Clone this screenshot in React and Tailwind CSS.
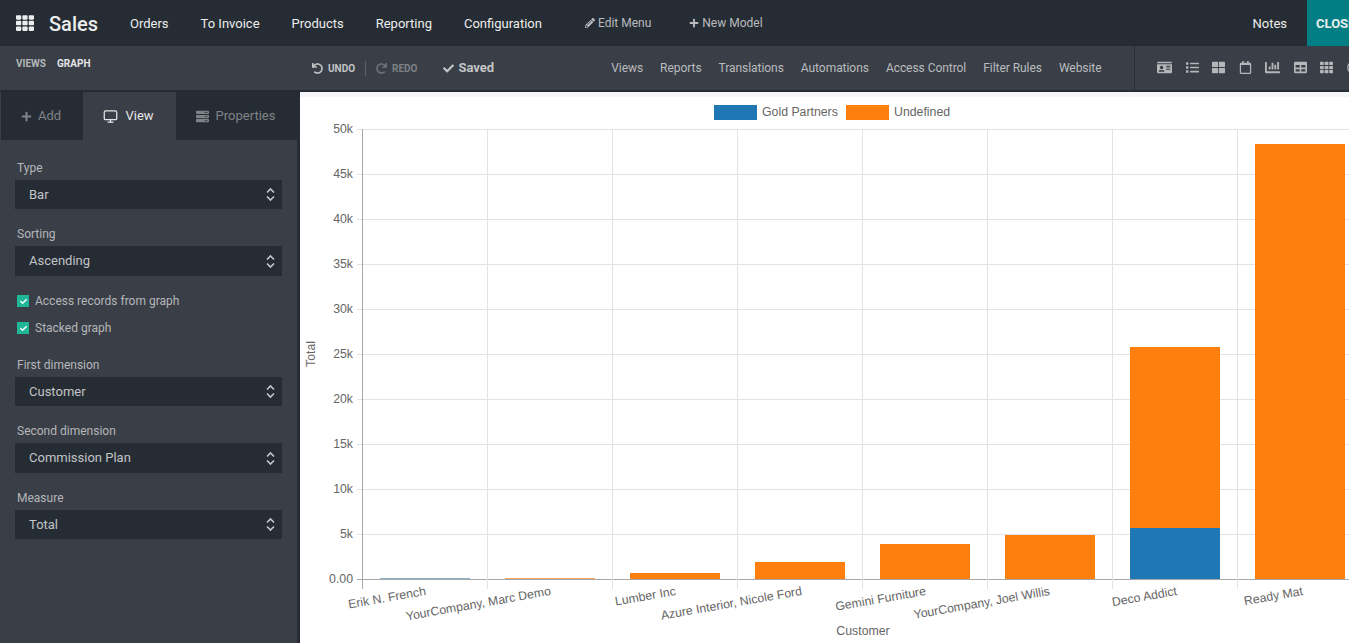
import { FaTh, FaPencilAlt, FaPlus, FaUndo, FaRedo, FaCheck, FaServer, FaIdCard, FaList, FaThLarge, FaRegCalendar, FaChartBar, FaTable, FaRegClock } from 'react-icons/fa';
import { Monitor } from 'lucide-react';

const menu = ['Orders', 'To Invoice', 'Products', 'Reporting', 'Configuration'];
const tools = ['Views', 'Reports', 'Translations', 'Automations', 'Access Control', 'Filter Rules', 'Website'];
const viewIcons = [FaIdCard, FaList, FaThLarge, FaRegCalendar, FaChartBar, FaTable, FaTh, FaRegClock];

const Select = ({ label, value, tall }) => (
  <div>
    <div className="text-[12px] leading-[16px] text-[#b4b6b9] pl-[2px] mb-[4px]">{label}</div>
    <div className={`w-[267px] ${tall ? 'h-[30px]' : 'h-[29px]'} bg-[#262c34] flex items-center justify-between pl-[14px] pr-[7px] text-[13px] text-[#c2c4c6]`}>
      <span>{value}</span>
      <svg width="9" height="15" viewBox="0 0 9 15" fill="none" stroke="#c2c4c6" strokeWidth="1.7">
        <path d="M1 5.5 L4.5 2 L8 5.5" />
        <path d="M1 9.5 L4.5 13 L8 9.5" />
      </svg>
    </div>
  </div>
);

const Check = ({ label }) => (
  <div className="flex items-center gap-[6px] pl-[2px] text-[12px] leading-[16px] text-[#b4b6b9]">
    <span className="w-[12px] h-[12px] bg-[#1fb797] flex items-center justify-center text-white">
      <FaCheck size={7} />
    </span>
    {label}
  </div>
);

const ticks = ['0.00', '5k', '10k', '15k', '20k', '25k', '30k', '35k', '40k', '45k', '50k'];
const bars = [
  { x: 380, top: 578, color: '#8ab4cc' },
  { x: 505, top: 578, color: '#f5a35c' },
  { x: 630, top: 573, color: '#ff7f0e' },
  { x: 755, top: 562, color: '#ff7f0e' },
  { x: 880, top: 544, color: '#ff7f0e' },
  { x: 1005, top: 535, color: '#ff7f0e' },
  { x: 1130, top: 347, color: '#ff7f0e' },
  { x: 1255, top: 144, color: '#ff7f0e' },
];
const labels = [
  { t: 'Erik N. French', x: 425, y: 587 },
  { t: 'YourCompany, Marc Demo', x: 550, y: 587 },
  { t: 'Lumber Inc', x: 675, y: 587 },
  { t: 'Azure Interior, Nicole Ford', x: 801, y: 587 },
  { t: 'Gemini Furniture', x: 925, y: 587 },
  { t: 'YourCompany, Joel Willis', x: 1049, y: 587 },
  { t: 'Deco Addict', x: 1176, y: 587 },
  { t: 'Ready Mat', x: 1302, y: 587 },
];

const Chart = () => (
  <svg viewBox="300 97 1049 546" className="w-full h-full block" fontFamily="'Liberation Sans', Arial, sans-serif" fontSize="12.3" fill="#666">
    <rect x="714" y="105" width="43" height="15" fill="#1f77b4" />
    <text x="762" y="116">Gold Partners</text>
    <rect x="846" y="105" width="43" height="15" fill="#ff7f0e" />
    <text x="894" y="116">Undefined</text>

    {ticks.map((t, i) => {
      const y = 579.5 - i * 45;
      return (
        <g key={t}>
          <line x1="357" x2="1349" y1={y} y2={y} stroke={i === 0 ? '#a8a8a8' : '#e3e3e3'} />
          <text x="353" y={y + 3} textAnchor="end">{t}</text>
        </g>
      );
    })}
    {[362, 487, 612, 737, 862, 987, 1112, 1237].map((x, i) => (
      <line key={x} x1={x + 0.5} x2={x + 0.5} y1="129" y2="589" stroke={i === 0 ? '#a8a8a8' : '#e3e3e3'} />
    ))}

    {bars.map(b => (
      <rect key={b.x} x={b.x} y={b.top} width="90" height={579 - b.top} fill={b.color} />
    ))}
    <rect x="1130" y="528" width="90" height="51" fill="#1f77b4" />

    {labels.map(l => (
      <text key={l.t} x={l.x} y={l.y + 8} textAnchor="end" transform={`rotate(-10 ${l.x} ${l.y})`}>{l.t}</text>
    ))}

    <text x="863" y="635" textAnchor="middle">Customer</text>
    <text x="315" y="354" textAnchor="middle" transform="rotate(-90 315 354)">Total</text>
  </svg>
);

export default function App() {
  return (
    <div className="h-screen w-full flex flex-col overflow-hidden bg-white font-['Roboto',sans-serif]">
      <header className="h-[46px] shrink-0 bg-[#262c34] flex items-center text-[#eceded]">
        <FaTh size={18} className="ml-[16px] text-[#eceded]" />
        <span className="ml-[15px] text-[20px] font-medium w-[32px] pt-[1px]">Sales</span>
        <nav className="ml-[49px] flex gap-[32px] text-[13px] pt-[1px]">
          {menu.map(m => <span key={m}>{m}</span>)}
        </nav>
        <div className="ml-[43px] flex items-center gap-[3px] text-[12px] text-[#b9bbbe]">
          <FaPencilAlt size={10} />Edit Menu
        </div>
        <div className="ml-[38px] flex items-center gap-[3px] text-[12px] text-[#b9bbbe]">
          <FaPlus size={10} />New Model
        </div>
        <span className="ml-auto mr-[20px] text-[13px] pt-[1px]">Notes</span>
        <div className="w-[42px] h-full bg-[#017e84] overflow-hidden flex items-center pl-[9px] pt-[1px] text-[13px] font-bold">CLOSE</div>
      </header>

      <div className="h-[44px] shrink-0 bg-[#3a3f47] flex text-[#b9bbbe] relative">
        <div className="w-[311px] pl-[16px] pt-[12px] text-[10px] font-bold flex gap-[11px] leading-[12px]">
          <span className="text-[#b4b6b9]">VIEWS</span>
          <span className="text-[#e4e5e6]">GRAPH</span>
        </div>
        <div className="flex items-center h-full text-[10px] font-bold">
          <FaUndo size={11} className="ml-[1px] text-[#c2c4c6]" />
          <span className="ml-[5px] text-[#c2c4c6]">UNDO</span>
          <span className="ml-[10px] w-px h-[15px] bg-[#5e6369]" />
          <FaRedo size={11} className="ml-[10px] text-[#6f7378]" />
          <span className="ml-[5px] text-[#7d8185]">REDO</span>
          <FaCheck size={11} className="ml-[26px] text-[#c2c4c6]" />
          <span className="ml-[4px] text-[13px] text-[#c2c4c6]">Saved</span>
        </div>
        <div className="ml-[117px] flex items-center gap-[17px] text-[12px] tracking-[-0.05px] h-full pb-[1px]">
          {tools.map(t => <span key={t}>{t}</span>)}
        </div>
        <div className="absolute left-[1134px] top-0 h-full w-[215px] border-l border-[#2b3037] flex items-center gap-[13.5px] pl-[22px] pb-[1px] text-[#b4b6b9]">
          {viewIcons.map((Icon, i) => <Icon key={i} size={i === 0 || i === 4 ? 15 : 13} className="shrink-0" />)}
        </div>
      </div>

      <div className="flex-1 min-h-0 flex border-t-[2px] border-[#262c34]">
        <aside className="w-[300px] shrink-0 bg-[#3a3f47] border-r-[3px] border-[#262c34] flex flex-col">
          <div className="h-[48px] shrink-0 bg-[#262c34] flex text-[13px] border-l border-[#3a3f47]">
            <div className="w-[80px] flex items-center justify-center gap-[6px] text-[#7f8387]">
              <FaPlus size={11} />Add
            </div>
            <div className="w-[93px] ml-[2px] bg-[#3a3f47] flex items-center justify-center gap-[7px] pr-[2px] text-[#e4e5e6]">
              <Monitor size={15} />View
            </div>
            <div className="flex-1 flex items-center justify-center gap-[7px] pr-[2px] text-[#7f8387]">
              <FaServer size={13} />Properties
            </div>
          </div>
          <div className="pl-[15px] pt-[20px] flex flex-col">
            <Select label="Type" value="Bar" />
            <div className="h-[17px]" />
            <Select label="Sorting" value="Ascending" tall />
            <div className="h-[17px]" />
            <Check label="Access records from graph" />
            <div className="h-[11px]" />
            <Check label="Stacked graph" />
            <div className="h-[21px]" />
            <Select label="First dimension" value="Customer" />
            <div className="h-[17px]" />
            <Select label="Second dimension" value="Commission Plan" tall />
            <div className="h-[17px]" />
            <Select label="Measure" value="Total" />
          </div>
        </aside>
        <main className="flex-1 min-w-0 flex flex-col bg-white">
          <div className="h-[5px] shrink-0 bg-[#f5f6fa]" />
          <div className="flex-1 min-h-0"><Chart /></div>
        </main>
      </div>
    </div>
  );
}
